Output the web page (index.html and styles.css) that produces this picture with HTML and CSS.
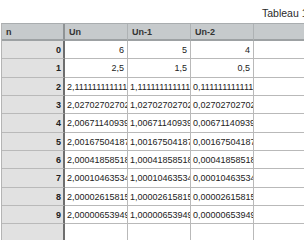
FILE: index.html
```html
<!DOCTYPE html>
<html>
<head>
<meta charset="utf-8">
<link rel="stylesheet" href="styles.css">
</head>
<body>
<div class="title">Tableau 1</div>
<div class="sheet">
  <div class="c hd">n</div><div class="c hd">Un</div><div class="c hd">Un-1</div><div class="c hd">Un-2</div><div class="c hd"></div>

  <div class="c rh">0</div><div class="c num">6</div><div class="c num">5</div><div class="c num">4</div><div class="c"></div>
  <div class="c rh">1</div><div class="c num">2,5</div><div class="c num">1,5</div><div class="c num">0,5</div><div class="c"></div>
  <div class="c rh">2</div><div class="c long">2,11111111111111</div><div class="c long">1,11111111111111</div><div class="c long">0,11111111111111</div><div class="c"></div>
  <div class="c rh">3</div><div class="c long">2,02702702702703</div><div class="c long">1,02702702702703</div><div class="c long">0,02702702702703</div><div class="c"></div>
  <div class="c rh">4</div><div class="c long">2,00671140939597</div><div class="c long">1,00671140939597</div><div class="c long">0,00671140939597</div><div class="c"></div>
  <div class="c rh">5</div><div class="c long">2,00167504187605</div><div class="c long">1,00167504187605</div><div class="c long">0,00167504187605</div><div class="c"></div>
  <div class="c rh">6</div><div class="c long">2,00041858518208</div><div class="c long">1,00041858518208</div><div class="c long">0,00041858518208</div><div class="c"></div>
  <div class="c rh">7</div><div class="c long">2,00010463534585</div><div class="c long">1,00010463534585</div><div class="c long">0,00010463534585</div><div class="c"></div>
  <div class="c rh">8</div><div class="c long">2,00002615815362</div><div class="c long">1,00002615815362</div><div class="c long">0,00002615815362</div><div class="c"></div>
  <div class="c rh">9</div><div class="c long">2,00000653949104</div><div class="c long">1,00000653949104</div><div class="c long">0,00000653949104</div><div class="c"></div>
  <div class="c rh"></div><div class="c"></div><div class="c"></div><div class="c"></div><div class="c"></div>
</div>
</body>
</html>
```

FILE: styles.css
```css
html, body {
  margin: 0;
  padding: 0;
  background: #ffffff;
}
body {
  width: 304px;
  height: 240px;
  overflow: hidden;
  font-family: "Liberation Sans", Arial, sans-serif;
  color: #222222;
}
.title {
  height: 23px;
  line-height: 26px;
  font-size: 10.5px;
  padding-left: 262px;
  white-space: nowrap;
  color: #2a2a2a;
}
.sheet {
  margin-left: 1px;
  display: grid;
  grid-template-columns: repeat(5, 63px);
  grid-template-rows: 17px;
  grid-auto-rows: 18.33px;
  border-top: 1px solid #a9adaf;
  border-left: 1px solid #b4b4b4;
  width: max-content;
}
.c {
  box-sizing: border-box;
  border-right: 1px solid #b9b9b9;
  border-bottom: 1px solid #b9b9b9;
  font-size: 9px;
  overflow: hidden;
  white-space: nowrap;
  display: flex;
  align-items: center;
  padding: 1px 3px 0 3px;
}
.hd {
  background: #c6cacc;
  font-weight: bold;
  color: #333333;
  border-bottom: 2px solid #9da1a3;
  border-right-color: #aeb2b4;
  padding-left: 4px;
}
.rh {
  background: #e1e1e1;
  font-weight: bold;
  justify-content: flex-end;
  border-right: 2px solid #6e6e6e;
  padding-right: 2px;
}
.hd.c:first-child {
  border-right: 2px solid #8f9395;
}
.num {
  justify-content: flex-end;
}
.long {
  justify-content: flex-start;
  padding-left: 2px;
}
```
